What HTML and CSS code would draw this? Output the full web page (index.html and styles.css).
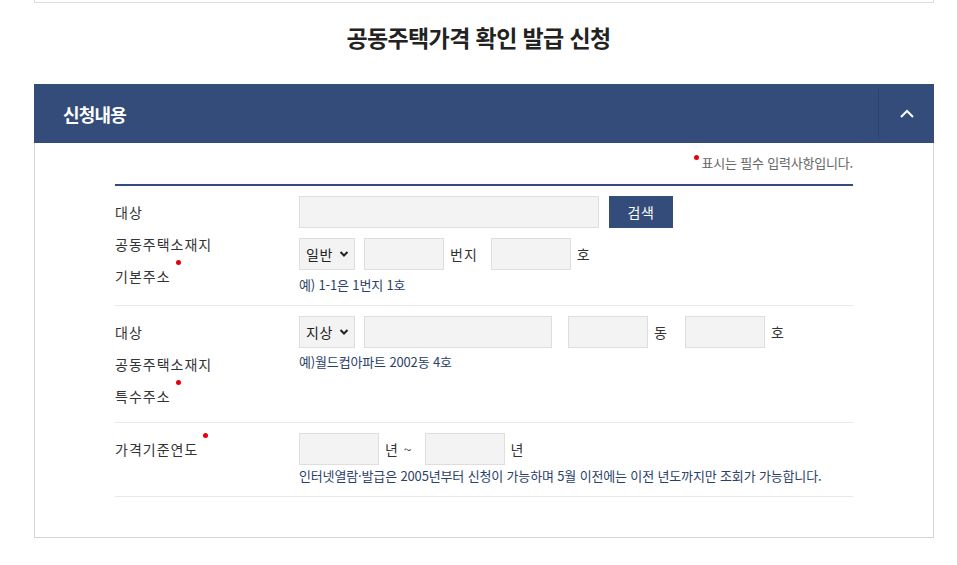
FILE: index.html
```html
<!DOCTYPE html>
<html lang="ko">
  <head>
    <title>공동주택가격 확인 발급 신청</title>
    <meta charset="utf-8" />
    <meta name="viewport" content="width=device-width" />
    <link rel="stylesheet" href="styles.css">
  </head>
  <body>
    <div class="topBox"></div>
    <h2 class="pageTitle">공동주택가격 확인 발급 신청</h2>

    <div class="panel">
      <div class="panelHead">
        <h3>신청내용</h3>
        <div class="toggle">
          <svg width="16" height="10" viewBox="0 0 16 10">
            <path d="M2 8 L8 2 L14 8" fill="none" stroke="#fff" stroke-width="2" />
          </svg>
        </div>
      </div>
      <div class="panelBody">
        <p class="note"><span class="req"></span>표시는 필수 입력사항입니다.</p>
        <div class="formTable">
          <div class="row">
            <div class="label">대상<br />공동주택소재지<br />기본주소<span class="req"></span></div>
            <div class="fields">
              <div class="line">
                <input type="text" class="inp w300" />
                <button class="btnSearch">검색</button>
              </div>
              <div class="line gap10">
                <div class="select">일반<svg width="10" height="8" viewBox="0 0 10 8"><path d="M1.5 2 L5 5.5 L8.5 2" fill="none" stroke="#222" stroke-width="2" /></svg></div>
                <input type="text" class="inp w80 ml9" />
                <span class="unit mr14">번지</span>
                <input type="text" class="inp w80" />
                <span class="unit">호</span>
              </div>
              <p class="hint mt7">예) 1-1은 1번지 1호</p>
            </div>
          </div>

          <div class="row row2">
            <div class="label">대상<br />공동주택소재지<br />특수주소<span class="req"></span></div>
            <div class="fields">
              <div class="line">
                <div class="select">지상<svg width="10" height="8" viewBox="0 0 10 8"><path d="M1.5 2 L5 5.5 L8.5 2" fill="none" stroke="#222" stroke-width="2" /></svg></div>
                <input type="text" class="inp w188 ml9" />
                <input type="text" class="inp w80 ml16" />
                <span class="unit mr18">동</span>
                <input type="text" class="inp w80" />
                <span class="unit">호</span>
              </div>
              <p class="hint mt6">예)월드컵아파트 2002동 4호</p>
            </div>
          </div>

          <div class="row">
            <div class="label">가격기준연도<span class="req"></span></div>
            <div class="fields">
              <div class="line">
                <input type="text" class="inp w80" />
                <span class="unit mr12">년 ~</span>
                <input type="text" class="inp w80" />
                <span class="unit">년</span>
              </div>
              <p class="hint mt3">인터넷열람·발급은 2005년부터 신청이 가능하며 5월 이전에는 이전 년도까지만 조회가 가능합니다.</p>
            </div>
          </div>
        </div>
      </div>
    </div>
  </body>
</html>
```

FILE: styles.css
```css
body {
  margin: 0;
  font-family: "Noto Sans CJK KR", "Noto Sans", sans-serif;
  color: #333;
  background: #fff;
}

.topBox {
  width: 898px;
  height: 2px;
  margin-left: 34px;
  border: 1px solid #dcdcdc;
  border-top: none;
}

.pageTitle {
  margin: 0;
  padding: 18px 0 31px;
  font-size: 23px;
  line-height: 32px;
  font-weight: bold;
  letter-spacing: -0.6px;
  text-align: center;
  color: #222;
}

.panel {
  width: 900px;
  margin-left: 34px;
}

.panelHead {
  display: flex;
  align-items: center;
  height: 59px;
  background-color: #344c7a;
  padding-left: 29px;
}
.panelHead h3 {
  flex: 1;
  margin: 0;
  color: #fff;
  font-size: 18px;
  font-weight: bold;
  letter-spacing: -0.8px;
}
.toggle {
  width: 55px;
  height: 50px;
  display: flex;
  align-items: center;
  justify-content: center;
  border-left: 1px solid #2b4170;
}

.panelBody {
  border: 1px solid #d6d6d6;
  border-top: none;
  padding: 12px 80px 40px;
}

.note {
  margin: 0 0 13px;
  font-size: 13px;
  line-height: 16px;
  color: #666;
  text-align: right;
  letter-spacing: -0.2px;
}
.note .req {
  margin: 0 3px 0 0;
}

.req {
  display: inline-block;
  width: 5px;
  height: 5px;
  border-radius: 50%;
  background-color: #e5000f;
  vertical-align: top;
  margin-left: 5px;
}

.formTable {
  border-top: 2px solid #344c7a;
}

.row {
  display: flex;
  padding: 10px 0 12px;
  border-bottom: 1px solid #e8e8e8;
}
.row2 {
  padding-bottom: 10px;
}

.label {
  width: 184px;
  font-size: 14px;
  line-height: 32px;
  letter-spacing: 1px;
  color: #333;
}

.fields {
  flex: 1;
}

.line {
  display: flex;
  align-items: center;
  height: 32px;
}
.gap10 {
  margin-top: 10px;
}

.inp {
  box-sizing: border-box;
  height: 32px;
  margin: 0;
  border: 1px solid #dedede;
  background-color: #f3f3f3;
  padding: 0 6px;
}
.w300 { width: 300px; }
.w188 { width: 188px; }
.w80 { width: 80px; }
.ml9 { margin-left: 9px; }
.ml16 { margin-left: 16px; }

.select {
  box-sizing: border-box;
  width: 56px;
  height: 32px;
  display: flex;
  align-items: center;
  justify-content: space-between;
  padding: 0 5px 0 6px;
  border: 1px solid #dedede;
  background-color: #f3f3f3;
  font-size: 14px;
  letter-spacing: 0.5px;
  color: #222;
}

.unit {
  margin-left: 6px;
  font-size: 14px;
  letter-spacing: 1px;
  color: #333;
}
.mr12 { margin-right: 12px; }
.mr14 { margin-right: 13px; }
.mr18 { margin-right: 17px; }

.btnSearch {
  width: 64px;
  height: 32px;
  margin-left: 10px;
  border: none;
  background-color: #344c7a;
  color: #fff;
  font-family: inherit;
  font-size: 14px;
  letter-spacing: 0.5px;
  cursor: pointer;
}

.hint {
  margin: 0;
  font-size: 13px;
  line-height: 16px;
  color: #2c3f68;
  letter-spacing: -0.15px;
}
.mt3 { margin-top: 3px; }
.mt6 { margin-top: 6px; }
.mt7 { margin-top: 7px; }
```
